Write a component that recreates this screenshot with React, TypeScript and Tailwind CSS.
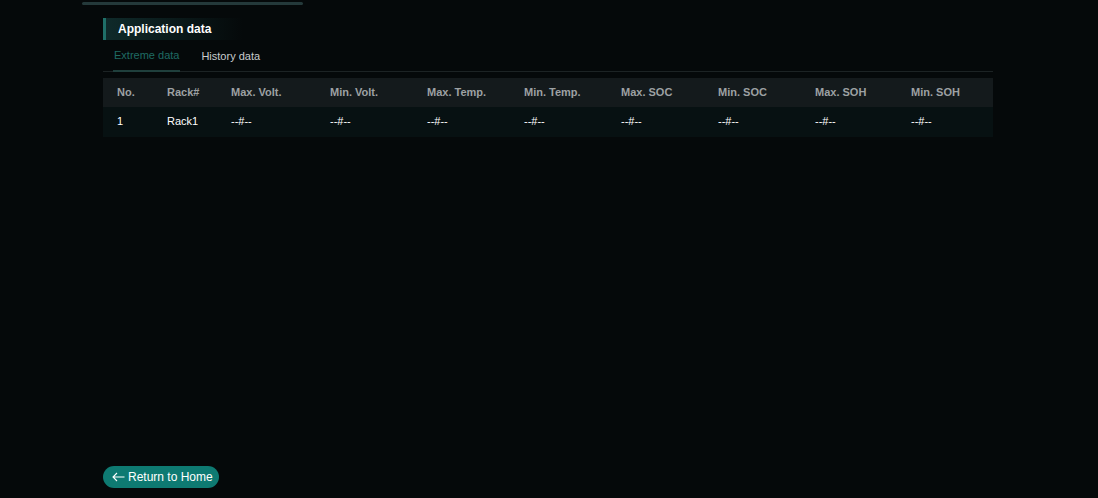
import React from "react";

const columns = [
  { label: "No.", w: "w-[50px]" },
  { label: "Rack#", w: "w-[64px]" },
  { label: "Max. Volt.", w: "w-[99px]" },
  { label: "Min. Volt.", w: "w-[97px]" },
  { label: "Max. Temp.", w: "w-[97px]" },
  { label: "Min. Temp.", w: "w-[97px]" },
  { label: "Max. SOC", w: "w-[97px]" },
  { label: "Min. SOC", w: "w-[97px]" },
  { label: "Max. SOH", w: "w-[96px]" },
  { label: "Min. SOH", w: "flex-1" },
];

const rows = [["1", "Rack1", "--#--", "--#--", "--#--", "--#--", "--#--", "--#--", "--#--", "--#--"]];

const App: React.FC = () => {
  return (
    <div
      className="w-[1098px] h-[498px] bg-[#05090a] text-white flex flex-col overflow-hidden"
      style={{ fontFamily: '"Liberation Sans", Arial, sans-serif' }}
    >
      <div className="ml-[82px] w-[221px] h-[3px] mt-[2px] bg-[#24393a] rounded-full"></div>

      <div className="ml-[103px] w-[890px] flex flex-col flex-1">
        <div className="mt-[13px] w-[140px] h-[22px] flex items-center border-l-[3px] border-[#1f6f68] bg-gradient-to-r from-[#0f2a2a] to-transparent pl-[12px]">
          <span className="text-[12px] font-bold text-white">Application data</span>
        </div>

        <div className="mt-[4px] flex border-b border-[#1c2324] text-[11px]">
          <button className="ml-[10px] px-px pt-[3px] pb-[6px] text-[#1f6b63] border-b-2 border-[#1f3f3c] -mb-px">
            Extreme data
          </button>
          <button className="ml-[21px] pt-[3px] pb-[6px] text-[#c9cccd]">History data</button>
        </div>

        <div className="mt-[6px]">
          <div className="flex h-[29px] items-center bg-[#141a1c] text-[11px] font-bold text-[#9da1a3]">
            {columns.map((c) => (
              <div key={c.label} className={`${c.w} pl-[14px]`}>
                {c.label}
              </div>
            ))}
          </div>
          {rows.map((r, i) => (
            <div key={i} className="flex h-[30px] items-center bg-[#071112] text-[11px] text-white">
              {r.map((v, j) => (
                <div key={j} className={`${columns[j].w} pl-[14px]`}>
                  {v}
                </div>
              ))}
            </div>
          ))}
        </div>

        <div className="mt-auto mb-[10px]">
          <button className="h-[22px] pl-[9px] pr-[6px] rounded-full bg-[#0e7a72] text-white text-[12px] flex items-center gap-[3px]">
            <svg width="13" height="10" viewBox="0 0 13 10" fill="none" stroke="white" strokeWidth="1.1">
              <path d="M12.5 5H1M5 1L1 5l4 4" />
            </svg>
            <span>Return to Home</span>
          </button>
        </div>
      </div>
    </div>
  );
};

export default App;
